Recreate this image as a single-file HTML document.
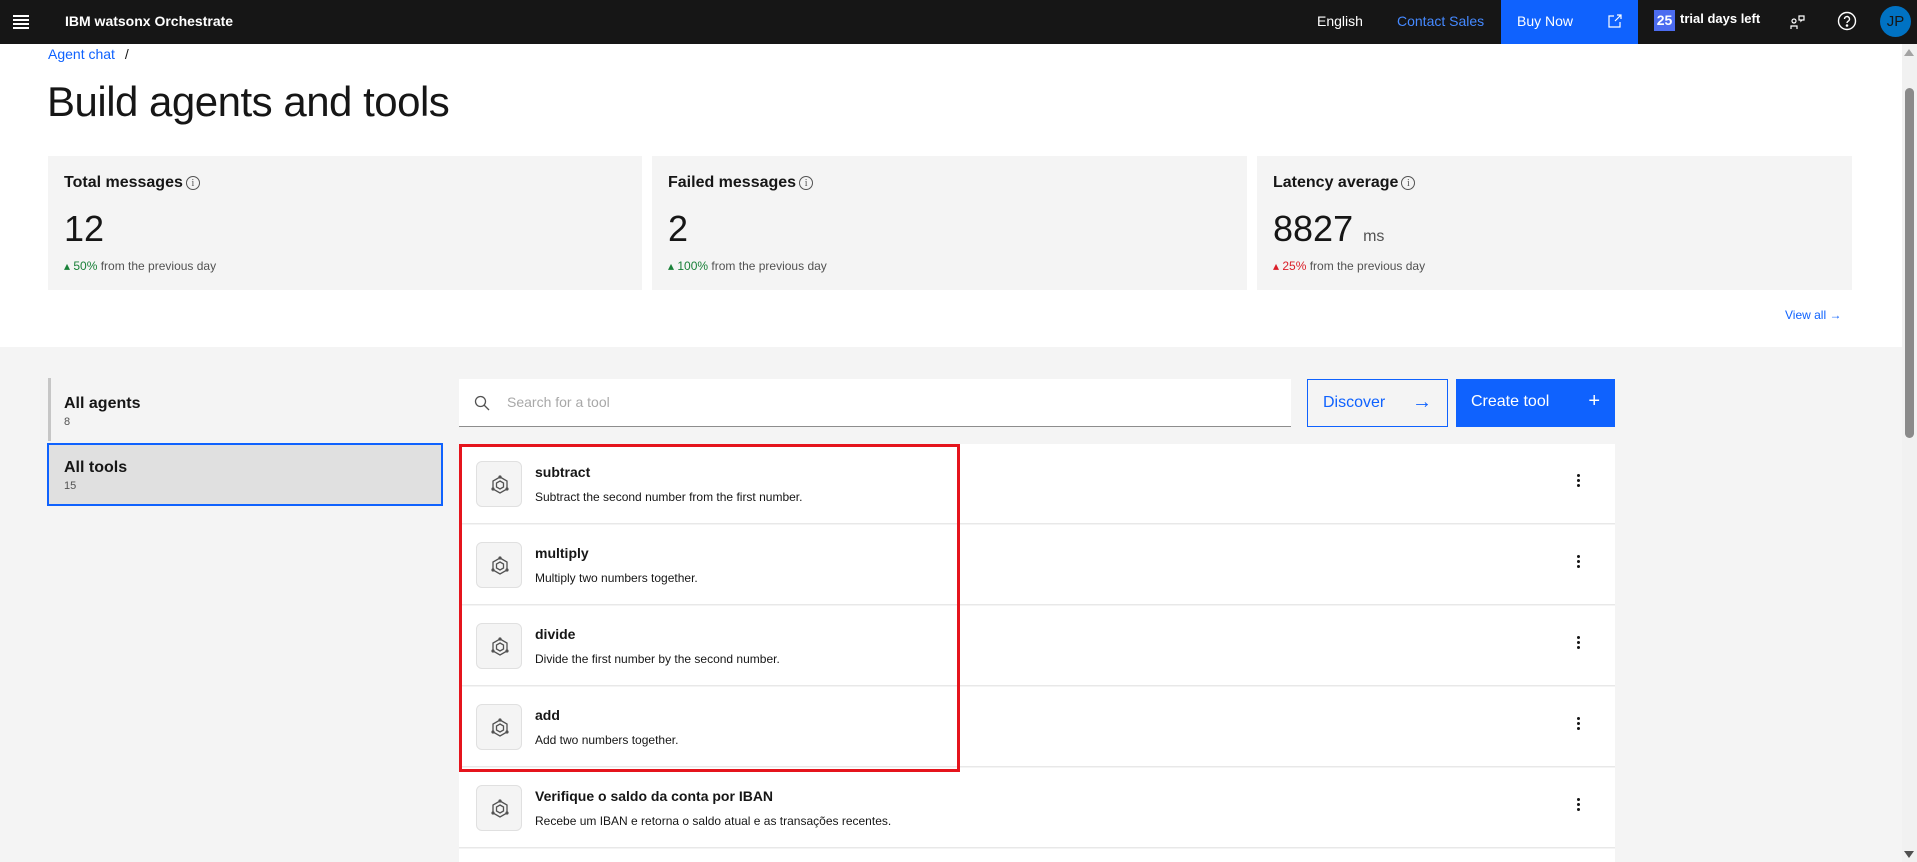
<!DOCTYPE html>
<html><head><meta charset="utf-8"><style>
*{box-sizing:border-box;margin:0;padding:0}
body{width:1917px;height:862px;overflow:hidden;font-family:"Liberation Sans",sans-serif;background:#fff;position:relative;color:#161616}
.a{position:absolute}
.hdr{left:0;top:0;width:1917px;height:44px;background:#161616;color:#fff;font-size:14px}
.card{top:156px;height:134px;background:#f4f4f4}
.card .l{position:absolute;left:16px;top:18px;font-size:16px;font-weight:bold}
.card .n{position:absolute;left:16px;top:52px;font-size:36px;font-weight:300}
.card .f{position:absolute;left:16px;top:103px;font-size:12px;color:#525252}
.info{display:inline-block;width:14px;height:14px;border:1px solid #525252;border-radius:50%;font-size:10px;text-align:center;line-height:13px;font-weight:normal;color:#525252;vertical-align:1px;margin-left:3px;font-family:"Liberation Serif",serif}
.row{left:459px;width:1156px;height:80px;background:#fff;border-bottom:1px solid #e8e8e8}
.ic{position:absolute;left:17px;top:17px;width:46px;height:46px;border:1px solid #e0e0e0;border-radius:6px;background:#f4f4f4}
.ic svg{position:absolute;left:12px;top:12px}
.rt{position:absolute;left:76px;top:20px;font-size:14px;font-weight:bold}
.rd{position:absolute;left:76px;top:46px;font-size:12px}
.kb{position:absolute;left:1118px;top:30px;width:3px}
.kb i{display:block;width:3px;height:3px;background:#161616;border-radius:50%;margin-bottom:2px}
</style></head><body>
<div class="a hdr">
 <div class="a" style="left:13px;top:15px;width:16px">
  <div style="height:2px;background:#fff;margin-bottom:2px"></div><div style="height:2px;background:#fff;margin-bottom:2px"></div><div style="height:2px;background:#fff;margin-bottom:2px"></div><div style="height:2px;background:#fff"></div></div>
 <div class="a" style="left:65px;top:13px;font-weight:bold">IBM watsonx Orchestrate</div>
 <div class="a" style="left:1317px;top:13px">English</div>
 <div class="a" style="left:1397px;top:13px;color:#4589ff">Contact Sales</div>
 <div class="a" style="left:1501px;top:0;width:137px;height:44px;background:#0f62fe"></div>
 <div class="a" style="left:1517px;top:13px">Buy Now</div>
 <svg class="a" style="left:1607px;top:13px" width="16" height="16" viewBox="0 0 16 16" fill="none" stroke="#fff" stroke-width="1.2"><path d="M7 3H2v11h11V9M10 2h4v4M14 2L8 8"/></svg>
 <div class="a" style="left:1654px;top:10px;width:21px;height:21px;background:#4c6cf0;font-weight:bold;font-size:14px;text-align:center;line-height:21px">25</div>
 <div class="a" style="left:1680px;top:11px;font-size:13px;font-weight:bold">trial days left</div>
 <svg class="a" style="left:1790px;top:14px" width="16" height="16" viewBox="0 0 16 16" fill="none" stroke="#fff" stroke-width="1.2"><circle cx="4" cy="7" r="2"/><path d="M1 15v-3h6v3M9 2h5v4h-2l-1 1v-1H9z"/></svg>
 <svg class="a" style="left:1837px;top:11px" width="20" height="20" viewBox="0 0 20 20" fill="none" stroke="#fff" stroke-width="1.4"><circle cx="10" cy="10" r="8.5"/><path d="M7.5 8a2.5 2.5 0 1 1 3.5 2.3c-.7.4-1 .9-1 1.7"/><circle cx="10" cy="14.5" r=".6" fill="#fff"/></svg>
 <div class="a" style="left:1880px;top:6px;width:31px;height:31px;border-radius:50%;background:#0072c3;color:#161616;font-size:15px;text-align:center;line-height:31px">JP</div>
</div>
<div class="a" style="left:1902px;top:44px;width:15px;height:818px;background:#f1f1f1"></div>
<div class="a" style="left:1905px;top:88px;width:9px;height:350px;background:#8a8a8a;border-radius:5px"></div>
<div class="a" style="left:1904px;top:49px;width:0;height:0;border-left:5px solid transparent;border-right:5px solid transparent;border-bottom:7px solid #a3a3a3"></div>
<div class="a" style="left:1904px;top:851px;width:0;height:0;border-left:5px solid transparent;border-right:5px solid transparent;border-top:7px solid #505050"></div>

<div class="a" style="left:48px;top:46px;font-size:14px;color:#0f62fe">Agent chat <span style="color:#161616;margin-left:6px">/</span></div>
<div class="a" style="left:47px;top:78px;font-size:42px;font-weight:300;letter-spacing:-0.5px">Build agents and tools</div>

<div class="a card" style="left:48px;width:594px"><div class="l">Total messages<span class="info">i</span></div><div class="n">12</div><div class="f"><span style="color:#198038">▴ 50%</span> from the previous day</div></div>
<div class="a card" style="left:652px;width:595px"><div class="l">Failed messages<span class="info">i</span></div><div class="n">2</div><div class="f"><span style="color:#198038">▴ 100%</span> from the previous day</div></div>
<div class="a card" style="left:1257px;width:595px"><div class="l">Latency average<span class="info">i</span></div><div class="n">8827 <span style="font-size:16px;color:#525252">ms</span></div><div class="f"><span style="color:#da1e28">▴ 25%</span> from the previous day</div></div>
<div class="a" style="left:1785px;top:308px;font-size:12px;color:#0f62fe">View all →</div>

<div class="a" style="left:0;top:347px;width:1902px;height:515px;background:#f4f4f4"></div>
<div class="a" style="left:48px;top:378px;width:393px;height:63px;border-left:3px solid #c6c6c6;background:#f4f4f4"></div>
<div class="a" style="left:64px;top:395px;font-size:16px;font-weight:bold">All agents</div>
<div class="a" style="left:64px;top:416px;font-size:11px;color:#525252">8</div>
<div class="a" style="left:47px;top:443px;width:396px;height:63px;border:2px solid #0f62fe;background:#e0e0e0"></div>
<div class="a" style="left:64px;top:459px;font-size:16px;font-weight:bold">All tools</div>
<div class="a" style="left:64px;top:480px;font-size:11px;color:#525252">15</div>

<div class="a" style="left:459px;top:379px;width:832px;height:48px;background:#fff;border-bottom:1px solid #8d8d8d"></div>
<svg class="a" style="left:474px;top:395px" width="16" height="16" viewBox="0 0 16 16" fill="none" stroke="#525252" stroke-width="1.3"><circle cx="6.5" cy="6.5" r="5"/><path d="M10 10l5 5"/></svg>
<div class="a" style="left:507px;top:394px;font-size:14px;color:#a8a8a8">Search for a tool</div>
<div class="a" style="left:1307px;top:379px;width:141px;height:48px;border:1px solid #0f62fe;color:#0f62fe;font-size:16px;padding:14px 15px">Discover<span style="position:absolute;right:15px;top:11px;font-size:20px">→</span></div>
<div class="a" style="left:1456px;top:379px;width:159px;height:48px;background:#0f62fe;color:#fff;font-size:16px;padding:14px 15px">Create tool<span style="position:absolute;right:15px;top:11px;font-size:20px">+</span></div>

<svg width="0" height="0" style="position:absolute"><symbol id="t" viewBox="0 0 22 22"><g fill="none" stroke="#525252" stroke-width="1.3"><path d="M11 3l7 4v8l-7 4-7-4V7z"/><path d="M11 7l3.5 2v4L11 15l-3.5-2V9z"/></g><circle cx="11" cy="3" r="1.6" fill="#525252"/><circle cx="4" cy="15" r="1.6" fill="#525252"/><circle cx="18" cy="15" r="1.6" fill="#525252"/></symbol></svg>

<div class="a row" style="top:444px"><div class="ic"><svg width="22" height="22"><use href="#t"/></svg></div><div class="rt">subtract</div><div class="rd">Subtract the second number from the first number.</div><div class="kb"><i></i><i></i><i></i></div></div>
<div class="a row" style="top:525px"><div class="ic"><svg width="22" height="22"><use href="#t"/></svg></div><div class="rt">multiply</div><div class="rd">Multiply two numbers together.</div><div class="kb"><i></i><i></i><i></i></div></div>
<div class="a row" style="top:606px"><div class="ic"><svg width="22" height="22"><use href="#t"/></svg></div><div class="rt">divide</div><div class="rd">Divide the first number by the second number.</div><div class="kb"><i></i><i></i><i></i></div></div>
<div class="a row" style="top:687px"><div class="ic"><svg width="22" height="22"><use href="#t"/></svg></div><div class="rt">add</div><div class="rd">Add two numbers together.</div><div class="kb"><i></i><i></i><i></i></div></div>
<div class="a row" style="top:768px"><div class="ic"><svg width="22" height="22"><use href="#t"/></svg></div><div class="rt">Verifique o saldo da conta por IBAN</div><div class="rd">Recebe um IBAN e retorna o saldo atual e as transações recentes.</div><div class="kb"><i></i><i></i><i></i></div></div>
<div class="a" style="left:459px;top:849px;width:1156px;height:13px;background:#fff"></div>

<div class="a" style="left:459px;top:444px;width:501px;height:328px;border:3px solid #e5141c"></div>
</body></html>
